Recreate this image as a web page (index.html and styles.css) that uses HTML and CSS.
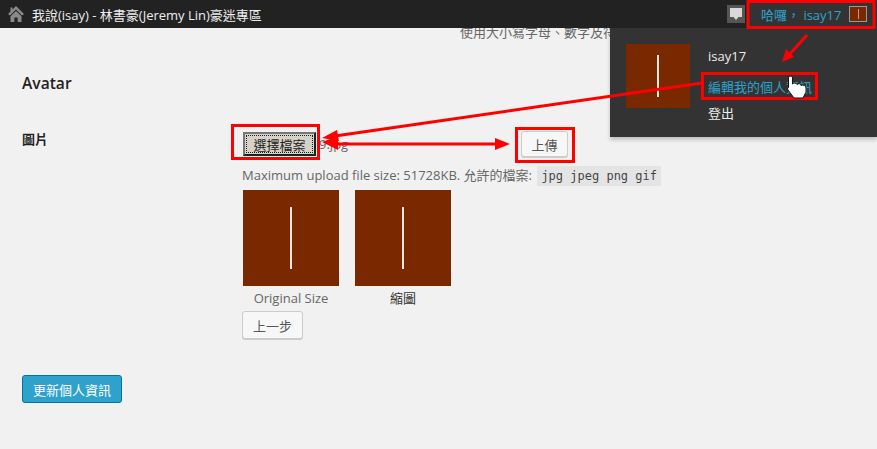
FILE: index.html
```html
<!DOCTYPE html>
<html lang="zh-Hant">
<head>
    <meta charset="UTF-8">
    <title>個人資料</title>
    <link rel="stylesheet" href="styles.css">
</head>
<body>
    <header class="admin-bar">
        <svg class="home-icon" viewBox="0 0 16 16" width="16" height="16">
            <path d="M8 0 L16 8 L14 9.5 L8 3.6 L2 9.5 L0 8 L2.5 5.5 V1.5 H4.5 V3.5 Z" fill="#8a8a8a"/>
            <path d="M8 5 L13.5 10.2 V16 H9.6 V11.5 H6.4 V16 H2.5 V10.2 Z" fill="#8a8a8a"/>
        </svg>
        <span class="site-name">我說(isay) - 林書豪(Jeremy Lin)豪迷專區</span>
        <div class="bar-right">
            <span class="comment-box">
                <svg viewBox="0 0 14 14" width="14" height="14">
                    <path d="M1 1 H13 V10 H9.5 L7 13 L4.5 10 H1 Z" fill="#d8d8d8"/>
                </svg>
            </span>
            <div class="account">
                <span class="howdy">哈囉， isay17</span>
                <span class="avatar avatar-tiny"></span>
            </div>
        </div>
    </header>

    <main class="content">
        <p class="hint">使用大小寫字母、數字及符號組合密碼</p>
        <h3 class="section-title">Avatar</h3>

        <div class="field-row">
            <div class="field-label">圖片</div>
            <div class="field-body">
                <div class="upload-row">
                    <button class="file-btn">選擇檔案</button>
                    <span class="file-name">9.jpg</span>
                    <button class="btn upload-btn">上傳</button>
                </div>
                <p class="upload-note">Maximum upload file size: 51728KB. 允許的檔案: <code>jpg jpeg png gif</code></p>
                <div class="previews">
                    <figure class="preview">
                        <div class="avatar avatar-large"></div>
                        <figcaption>Original Size</figcaption>
                    </figure>
                    <figure class="preview">
                        <div class="avatar avatar-large"></div>
                        <figcaption class="dark">縮圖</figcaption>
                    </figure>
                </div>
                <button class="btn back-btn">上一步</button>
            </div>
        </div>

        <button class="btn-primary">更新個人資訊</button>
    </main>

    <!-- account dropdown, open -->
    <div class="account-menu">
        <div class="avatar avatar-menu"></div>
        <ul class="menu-links">
            <li>isay17</li>
            <li class="link">編輯我的個人資訊</li>
            <li>登出</li>
        </ul>
    </div>

    <!-- red markup drawn on top of the screenshot -->
    <svg class="markup" viewBox="0 0 877 449" width="877" height="449">
        <g fill="none" stroke="#f00" stroke-width="3">
            <rect x="748" y="1.5" width="126" height="26"/>
            <rect x="702.5" y="73.5" width="114" height="25"/>
            <rect x="232.5" y="125.5" width="86" height="33"/>
            <rect x="516.5" y="128.5" width="57" height="33"/>
        </g>
        <g stroke="#f00" stroke-width="3">
            <line x1="807" y1="35" x2="788" y2="56"/>
            <line x1="702" y1="83" x2="335" y2="136"/>
            <line x1="335" y1="144" x2="500" y2="144"/>
        </g>
        <g fill="#f00">
            <polygon points="782,62 786,49 794,57"/>
            <polygon points="322,138 337,130 339,141"/>
            <polygon points="322,142 338,136 338,150"/>
            <polygon points="510,144 495,138 495,150"/>
        </g>
        <path d="M788.5 78 C788.5 75.5 792.5 75.5 792.5 78 V84 C794 82.5 796 82.5 797 84.5 C798.5 83 800.5 83.5 801 85.5 C803 84.5 806 85.5 806 88 V92 L803 98 H794 L788 90 C787 88 788 87 788.5 87.5 Z" fill="#fff" stroke="#111" stroke-width="1"/>
    </svg>
</body>
</html>
```

FILE: styles.css
```css
/* Basic page styling */
* {
    box-sizing: border-box;
}
body {
    margin: 0;
    height: 449px;
    overflow: hidden;
    position: relative;
    background-color: #f1f1f1;
    color: #444;
    font-family: "Open Sans", "Noto Sans CJK TC", sans-serif;
    font-size: 13px;
}
/* Top admin bar */
.admin-bar {
    position: relative;
    z-index: 2;
    display: flex;
    align-items: center;
    height: 28px;
    padding-left: 8px;
    background-color: #222;
    color: #eee;
}
.site-name {
    margin-left: 8px;
}
.bar-right {
    display: flex;
    align-items: center;
    height: 100%;
    margin-left: auto;
}
.comment-box {
    display: flex;
    align-items: center;
    justify-content: center;
    width: 18px;
    height: 18px;
    margin-right: 2px;
    background-color: #555;
}
.account {
    display: flex;
    align-items: center;
    width: 130px;
    height: 100%;
    padding-left: 14px;
    background-color: #333;
}
.howdy {
    width: 88px;
    color: #2ea2cc;
    white-space: nowrap;
}
/* Avatar placeholder: brown square with a white line */
.avatar {
    display: flex;
    align-items: center;
    justify-content: center;
    background-color: #7a2800;
}
.avatar::after {
    content: "";
    width: 2px;
    height: 65%;
    background-color: #f4e6dc;
}
.avatar-tiny {
    width: 18px;
    height: 16px;
    border: 1px solid #999;
}
.avatar-tiny::after {
    width: 1px;
    background-color: #c09a80;
}
.avatar-menu {
    flex: none;
    width: 64px;
    height: 64px;
}
.avatar-large {
    width: 96px;
    height: 96px;
}
/* Main content */
.content {
    padding-left: 22px;
}
.hint {
    margin: -4px 0 0 438px;
    line-height: 16px;
    white-space: nowrap;
    color: #666;
}
.section-title {
    margin: 32px 0 0;
    height: 22px;
    font-size: 15.6px;
    font-weight: 600;
    line-height: 22px;
    color: #222;
}
.field-row {
    display: grid;
    grid-template-columns: 220px 1fr;
    margin-top: 37px;
}
.field-label {
    margin-top: -2px;
    font-weight: 600;
    color: #222;
}
.field-body {
    padding-left: 1px;
}
.upload-row {
    display: flex;
    align-items: center;
    height: 26px;
}
.file-btn {
    width: 73px;
    height: 24px;
    padding: 0;
    border: 2px outset #777;
    outline: 1px dotted #222;
    outline-offset: -4px;
    background-color: #d6d2c8;
    color: #222;
    font-family: inherit;
    font-size: 13px;
}
.file-name {
    width: 205px;
    padding-left: 3px;
    color: #666;
}
/* Secondary buttons */
.btn {
    height: 26px;
    padding: 0;
    border: 1px solid #ccc;
    border-radius: 3px;
    box-shadow: 0 1px 0 #ccc;
    background-color: #f7f7f7;
    color: #555;
    font-family: inherit;
    font-size: 13px;
}
.upload-btn {
    width: 47px;
}
.back-btn {
    display: block;
    width: 61px;
    height: 28px;
    margin: 5px 0 0 -1px;
}
.upload-note {
    margin: 8px 0 0 -1px;
    height: 20px;
    line-height: 20px;
    color: #666;
    white-space: nowrap;
}
.upload-note code {
    display: inline-block;
    margin-left: 2px;
    padding: 0 4px;
    background-color: #e4e4e4;
    color: #444;
    font-family: "DejaVu Sans Mono", monospace;
    font-size: 12px;
}
.previews {
    display: flex;
    gap: 16px;
    margin-top: 5px;
}
.preview {
    margin: 0;
    width: 96px;
}
.preview figcaption {
    height: 20px;
    line-height: 24px;
    text-align: center;
    color: #666;
}
.preview figcaption.dark {
    color: #333;
}
/* Blue primary button */
.btn-primary {
    display: block;
    width: 100px;
    height: 28px;
    margin-top: 36px;
    padding: 0;
    border: 1px solid #0074a2;
    border-radius: 3px;
    background-color: #2ea2cc;
    color: #fff;
    font-family: inherit;
    font-size: 13px;
}
/* Open account dropdown */
.account-menu {
    position: absolute;
    z-index: 3;
    top: 28px;
    right: 0;
    display: flex;
    gap: 18px;
    width: 267px;
    height: 109px;
    padding: 15px 16px;
    background-color: #333;
    box-shadow: 0 3px 4px rgba(0, 0, 0, 0.2);
}
.avatar-menu {
    margin-top: 1px;
}
.menu-links {
    margin: 0;
    padding: 0;
    list-style: none;
    color: #eee;
}
.menu-links li {
    height: 26px;
    line-height: 26px;
}
.menu-links li.link {
    margin-top: 5px;
    color: #2ea2cc;
}
/* Red markup layer */
.markup {
    position: absolute;
    z-index: 4;
    top: 0;
    left: 0;
}
```
